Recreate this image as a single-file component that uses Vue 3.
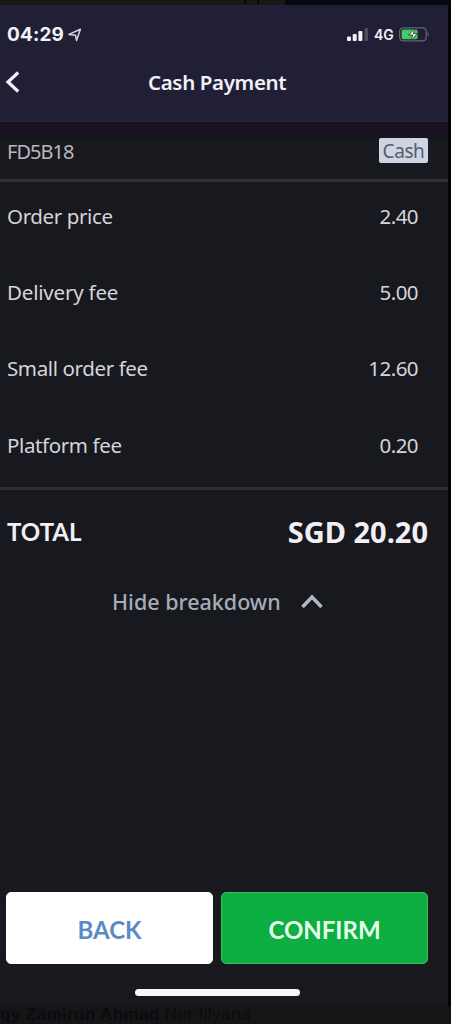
<script setup>
const fees = [
  { label: 'Order price', amount: '2.40', cls: 'order' },
  { label: 'Delivery fee', amount: '5.00', cls: 'delivery' },
  { label: 'Small order fee', amount: '12.60', cls: 'small' },
  { label: 'Platform fee', amount: '0.20', cls: 'platform' },
]
</script>

<template>
  <div class="page">
    <div class="top-strip"><i></i></div>
    <main class="phone">
      <header>
        <div class="status">
          <span class="time">04:29</span>
          <svg class="location" width="14" height="14" viewBox="0 0 14 14"><path d="M1 6.4 12.4 1.2 8.5 12.4 7.5 7.2Z" /></svg>
          <svg class="signal" width="22" height="14" viewBox="0 0 22 14">
            <rect x="0" y="8.5" width="4" height="4.5" rx="1" /><rect x="5.7" y="6" width="4" height="7" rx="1" /><rect x="11.4" y="3" width="4" height="10" rx="1" /><rect x="17.5" y="0" width="3.5" height="13" rx="1" opacity=".22" />
          </svg>
          <span class="network">4G</span>
          <svg class="battery" width="31" height="15" viewBox="0 0 31 15">
            <rect x=".7" y=".9" width="26.5" height="13" rx="3.2" fill="none" stroke="#737986" />
            <rect x="2.6" y="2.6" width="16" height="9.7" rx="1.8" fill="#45ca68" />
            <path d="M15.8 1.2 9.6 8h4l-1.5 5.6 6.2-7h-4Z" fill="#eef4ee" stroke="#20312d" stroke-width=".8" />
            <path d="M28.7 5.2q2 2.2 0 4.4" fill="#737986" />
          </svg>
        </div>
        <div class="navigation">
          <svg class="back-icon" width="16" height="24" viewBox="0 0 16 24"><path d="M13.2 2.5 3 12l10.2 9.5" /></svg>
          <h1>Cash Payment</h1>
        </div>
      </header>
      <div class="shade"></div>
      <section class="order-id"><span class="code">FD5B18</span><span class="tag">Cash</span></section>
      <section class="fees">
        <div v-for="fee in fees" :key="fee.label" class="fee"><span :class="fee.cls">{{ fee.label }}</span><span class="amount">{{ fee.amount }}</span></div>
      </section>
      <section class="total"><span class="total-label">TOTAL</span><strong>SGD 20.20</strong></section>
      <div class="breakdown"><span>Hide breakdown</span><svg width="24" height="17" viewBox="0 0 24 17"><path d="m2.5 14 9.5-10 9.5 10" /></svg></div>
      <div class="actions"><button class="back">BACK</button><button class="confirm">CONFIRM</button></div>
      <div class="home"></div>
    </main>
    <footer><b>qy Zamirun Ahmad</b> Nur Illyana</footer>
  </div>
</template>

<style>
body { background: #fff; }
</style>
<style scoped>
* { box-sizing: border-box; }
.page { width: 451px; height: 1024px; overflow: hidden; background: #050509; font-family: "Noto Sans", sans-serif; }
.top-strip { height: 5px; background: linear-gradient(90deg, #181818 0 285px, #040913 285px); }
.top-strip i { display: block; width: 15px; height: 4px; margin-left: 244px; border: solid #090909; border-width: 0 2px; }
.phone { width: 448px; height: 1001px; background: #18191e; }
header { height: 116px; background: #211f35; color: #f2f1f8; }
.status { height: 56px; padding: 3px 18px 0 7px; display: flex; align-items: center; }
.time { width: 58px; font: 700 19px/24px Inter, sans-serif; letter-spacing: .15px; }
.location { margin-left: 3px; fill: none; stroke: #d7d6df; stroke-width: 1.5; stroke-linejoin: round; }
.signal { margin-left: auto; fill: #f3f2f8; }
.network { margin-left: 5px; width: 22px; font: 600 14px/20px Inter, sans-serif; }
.battery { margin-left: 3px; }
.navigation { height: 42px; display: grid; grid-template-columns: 24px 1fr; align-items: center; }
.back-icon { margin-left: 5px; fill: none; stroke: #f1f0f8; stroke-width: 3.2; }
h1 { margin: -1px 0 0 124px; font-size: 20.5px; line-height: 28px; font-weight: 600; letter-spacing: -.35px; white-space: nowrap; }
.shade { height: 17px; background: #191321; border-top: 1px solid #24264a; }
.order-id { height: 44px; padding: 0 20px 1px 7px; display: flex; justify-content: space-between; align-items: flex-start; border-bottom: 3px solid #303136; color: #b8b8be; font-size: 20px; }
.code { padding-top: 2px; line-height: 24px; letter-spacing: -.95px; }
.tag { width: 49px; height: 25px; border-radius: 2px; text-align: center; line-height: 27px; background: #cdd4e2; color: #535d6d; font-size: 19px; letter-spacing: -.4px; }
.fees { height: 308px; padding: 0 30px 0 7px; border-bottom: 3px solid #2e2f34; color: #d6d4d9; }
.fee { height: 76.3px; padding-bottom: 9px; display: flex; justify-content: space-between; align-items: center; font-size: 20.5px; line-height: 28px; letter-spacing: -.38px; }
.fee .delivery { letter-spacing: -.2px; }
.fee .amount { letter-spacing: -.55px; }
.total { height: 84px; padding: 0 20px 0 7px; display: flex; justify-content: space-between; align-items: center; color: #f2eff4; }
.total-label { font: 700 24px/32px Lato, sans-serif; margin-top: -1px; }
strong { font-size: 29px; line-height: 36px; font-weight: 700; letter-spacing: 0; }
.breakdown { height: 54px; padding: 1px 0 0 112px; display: flex; align-items: center; gap: 19px; color: #a5acba; font-size: 21.5px; font-weight: 500; }
.breakdown svg { fill: none; stroke: #b1b8c5; stroke-width: 3.5; }
.actions { height: 72px; margin: 264px 20px 0 6px; display: grid; grid-template-columns: 207px 207px; gap: 8px; }
button { padding: 4px 0 0; border: 1px solid #fff; border-radius: 5px; font: 700 24px/32px Lato, sans-serif; }
.back { background: #fff; color: #5a8bc3; }
.confirm { background: #0dae42; border-color: #48b954; color: #e5ffe9; }
.home { width: 165px; height: 7px; border-radius: 4px; margin: 25px 0 0 135px; background: #f8f8f8; }
footer { height: 18px; background: #151515; color: #090c13; font: 17px/18px "Liberation Sans", sans-serif; letter-spacing: .4px; white-space: nowrap; }
</style>
